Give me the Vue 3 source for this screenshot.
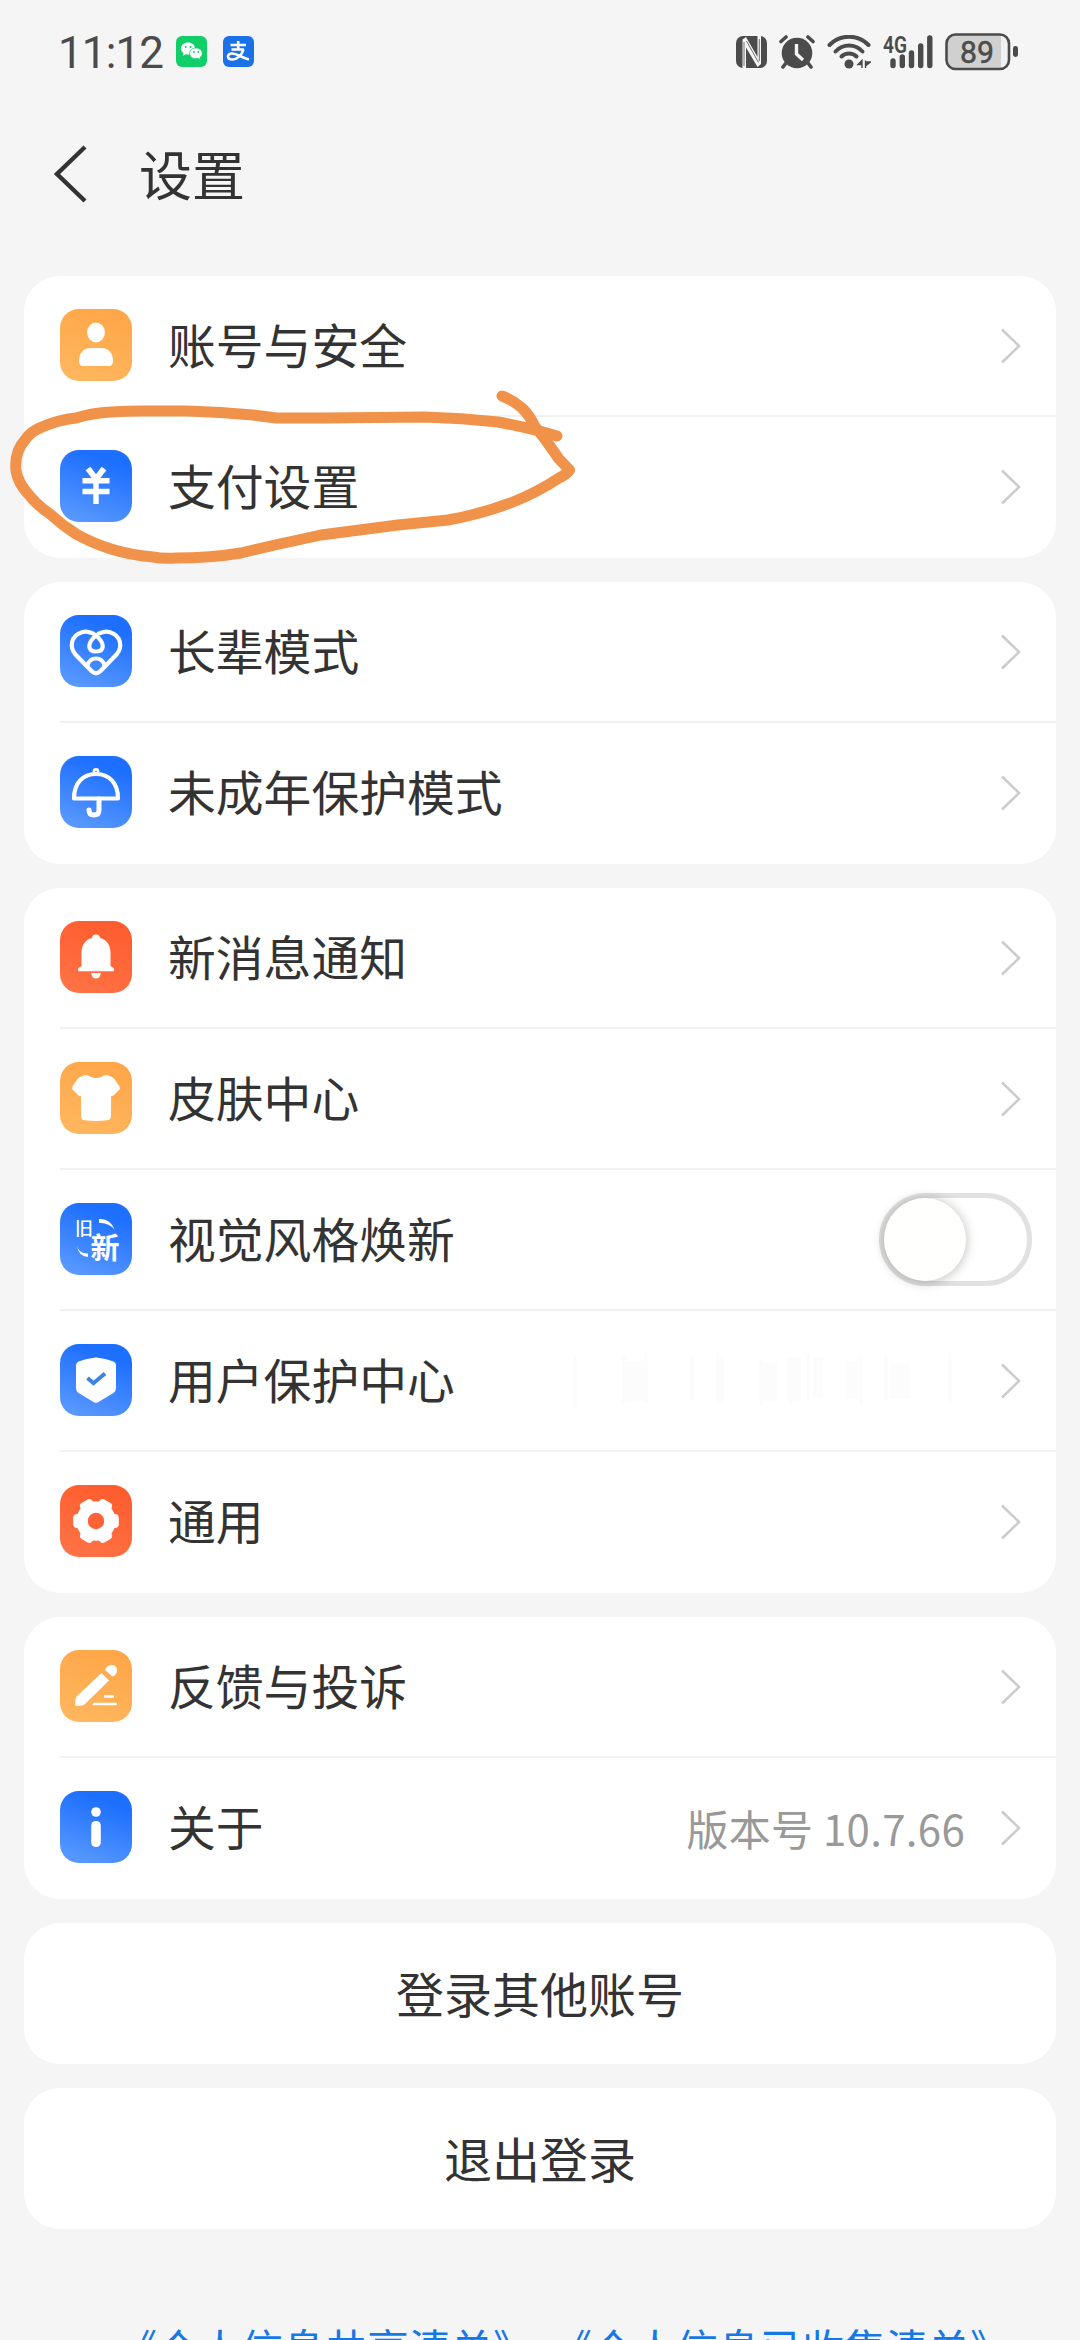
<script setup>
import { ref } from 'vue';

const groups = ref([
  [
    { id: 'account', title: '账号与安全', color: 'orange' },
    { id: 'pay', title: '支付设置', color: 'blue' },
  ],
  [
    { id: 'elder', title: '长辈模式', color: 'blue' },
    { id: 'minor', title: '未成年保护模式', color: 'blue' },
  ],
  [
    { id: 'notice', title: '新消息通知', color: 'red' },
    { id: 'skin', title: '皮肤中心', color: 'orange' },
    { id: 'style', title: '视觉风格焕新', color: 'blue', toggle: true },
    { id: 'protect', title: '用户保护中心', color: 'blue', faded: true },
    { id: 'general', title: '通用', color: 'red' },
  ],
  [
    { id: 'feedback', title: '反馈与投诉', color: 'orange' },
    { id: 'about', title: '关于', color: 'blue', value: '版本号 10.7.66' },
  ],
]);

const actions = ['登录其他账号', '退出登录'];
const links = ['《个人信息共享清单》', '《个人信息已收集清单》'];
const newStyle = ref(false);
const lobes = [0, 60, 120, 180, 240, 300];
</script>

<template>
  <div class="page">
    <header class="status-bar">
      <span class="time">11:12</span>
      <svg class="app-icon wechat" viewBox="0 0 31 31">
        <rect width="31" height="31" rx="6" fill="#10cf68" />
        <path d="M12 6.500c-4 0-7 2.600-7 6 0 2 1 3.500 2.500 4.600l-.5 2.600 3-1.500 2 .3c4 0 7-2.600 7-6s-3-6-7-6z" fill="#fff" />
        <path d="M20 12c-3.700 0-6.300 2.400-6.300 5.400s2.600 5.300 6.300 5.300l2.200-.3 2.300 1.300-.5-2.200c1.400-1 2.300-2.400 2.300-4.100 0-3-2.600-5.400-6.300-5.400z" fill="#fff" stroke="#10cf68" stroke-width=".8" />
        <g fill="#10cf68">
          <circle cx="9.700" cy="11" r="1" />
          <circle cx="14.500" cy="11" r="1" />
          <circle cx="18" cy="16" r=".9" />
          <circle cx="22.300" cy="16" r=".9" />
        </g>
      </svg>
      <svg class="app-icon" viewBox="0 0 31 31">
        <rect width="31" height="31" rx="6" fill="#1b72e8" />
        <g fill="none" stroke="#fff" stroke-width="2.600">
          <path d="M7.500 9h15.500M15.200 5v8.500M8.500 13.500h12.500" />
          <path d="M20.500 13.500c-1.500 5-6 10-11 10-6 0-6-6-.5-6 5 0 9 4 17 6" />
        </g>
      </svg>

      <div class="status-icons">
        <svg class="nfc" viewBox="0 0 31 32">
          <rect width="31" height="32" rx="7" fill="#4b4b4b" />
          <path d="M6.500 32V3.500L10 1l11.500 20V0H25v28l-3.500 3L10 11.500V32z" fill="#f5f5f5" />
          <path d="M8 6v24M10.500 5l12 21.500M23.300 3v22" fill="none" stroke="#4b4b4b" stroke-width=".8" />
        </svg>
        <svg class="alarm" viewBox="0 0 36 34">
          <circle cx="18" cy="18" r="15.300" fill="#4b4b4b" />
          <path d="M2 6.500 7 2M34 6.500 29 2M7 28l-3 4M29 28l3 4" stroke="#4b4b4b" stroke-width="3.600" stroke-linecap="round" />
          <path d="M17.500 9v10l6.500 6" fill="none" stroke="#f5f5f5" stroke-width="3.400" />
        </svg>
        <svg class="wifi" viewBox="0 0 44 34">
          <g fill="none" stroke="#4b4b4b" stroke-width="4" stroke-linecap="round">
            <path d="M2.500 10C13-1 31-1 41.500 10" />
            <path d="M8.500 16.500c7.500-8 19.500-8 27 0" />
            <path d="M14.500 21.500c4-4 11-4 15 0" />
          </g>
          <circle cx="22" cy="29" r="4.500" fill="#4b4b4b" />
          <path d="M35 25.500v7.500M31 29.500l4-4v4zM38.500 33v-7.500M38.500 31l5-4h-5z" fill="#4b4b4b" stroke="#4b4b4b" stroke-width="1.400" />
        </svg>
        <svg class="signal" viewBox="0 0 50 34">
          <text x="0" y="17.500" class="net" textLength="24" lengthAdjust="spacingAndGlyphs">4G</text>
          <g stroke="#4b4b4b" stroke-width="5.400" stroke-linecap="round">
            <path d="M10 26v4.500M19.300 22v8.500M28.500 18v12.500M37.700 11v19.500M46.800 3v27.500" />
          </g>
        </svg>
        <svg class="battery" viewBox="0 0 74 38">
          <rect x="1.500" y="1.500" width="62.500" height="34.500" rx="9" fill="#f1f1f1" />
          <path d="M56 2v34H11q-9 0-9-9V11q0-9 9-9z" fill="#d0d0d0" />
          <rect x="1.500" y="1.500" width="62.500" height="34.500" rx="9" fill="none" stroke="#4b4b4b" stroke-width="2.600" />
          <rect x="68" y="13" width="5" height="11" rx="2.400" fill="#4b4b4b" />
          <text x="32" y="29.500" class="level" text-anchor="middle" textLength="34" lengthAdjust="spacingAndGlyphs">89</text>
        </svg>
      </div>
    </header>

    <nav class="title-bar">
      <svg class="back" viewBox="0 0 36 60">
        <path d="M33 3 5 30l28 27" fill="none" stroke="#333" stroke-width="4.400" />
      </svg>
      <h1>设置</h1>
    </nav>

    <main class="content">
      <section v-for="(group, index) in groups" :key="index" class="card">
        <div v-for="item in group" :key="item.id" class="row">
          <div class="icon" :class="item.color">
            <svg viewBox="0 0 72 72">
              <g v-if="item.id === 'account'" fill="#fff">
                <ellipse cx="36" cy="23.500" rx="8.900" ry="10" />
                <path d="M19 52c0-8 5-13 11-13h12c6 0 11 5 11 13 0 3-1.500 5-4 5H23c-2.500 0-4-2-4-5z" />
              </g>
              <g v-else-if="item.id === 'pay'" fill="none" stroke="#fff" stroke-width="5.400">
                <path d="M28 18.500 36 29l8-10.500" stroke-width="5.800" />
                <path d="M22.500 30.800h27M22.500 41.500h27M36 29v25" />
              </g>
              <g v-else-if="item.id === 'elder'" class="line">
                <path d="M36 36.500C27 36.500 27 28 36 20.500C40 17 46 16 50 17.200C61 20.500 63 32 56.500 39.500L40 56.500Q36 60 32 56.500L15.500 39.500C9 32 11 20.500 22 17.200C26 16 32 17 36 20.500C45 28 45 36.500 36 36.500Z" />
                <path d="M27.500 51C29 41 43 41 44.500 51" />
              </g>
              <g v-else-if="item.id === 'minor'" class="line">
                <path d="M14 42.500C14 27 23 18 36 18s22 9 22 24.500z" />
                <path d="M39 43v11q0 5-5 5t-5-5" stroke-width="5" />
                <circle cx="36" cy="15.500" r="1.300" />
              </g>
              <g v-else-if="item.id === 'notice'" fill="#fff">
                <circle cx="36" cy="17.500" r="4" />
                <path d="M21.500 45V32c0-9 5-15.500 14.500-15.500S50.500 23 50.500 32v13l3 2q1.500 3-1 3.200h-33q-2.500-.2-1-3.200z" />
                <path d="M31 52h10q-1 5.500-5 5.500T31 52z" />
              </g>
              <path v-else-if="item.id === 'skin'" d="M25 13q3-.5 5 1.500 6 3 12 0 2-2 5-1.500l5 2q2 1 3.500 3.500l4 6q1 2-1 4L54 33q-1.500 1.500-3 1v20q0 4-4 4.300-11 1.400-22 0-4-.3-4-4.300V34q-1.500.5-3-1l-4.500-4.500q-2-2-1-4l4-6Q18 16 20 15z" fill="#fff" />
              <g v-else-if="item.id === 'style'" fill="#fff">
                <text x="15" y="31.500" class="old">旧</text>
                <text x="30.500" y="55.500" class="new">新</text>
                <path d="M39 16q11-1 15.500 10.500Q48 19 39 20zM17 42q1.500 9 11 8.500v3.500Q18 53 17 42z" />
              </g>
              <g v-else-if="item.id === 'protect'">
                <path d="M36 13.500q10 1 17.500 4 2.500 1 2.500 4V44q0 3-2.500 5L38 58.300q-2 1-4 0L18.500 49q-2.500-2-2.500-5V21.500q0-3 2.500-4 7.500-3 17.500-4z" fill="#fff" />
                <path d="m27.500 34 6 5.200L45 29.500" fill="none" stroke="#3f83e0" stroke-width="4" />
              </g>
              <g v-else-if="item.id === 'general'">
                <circle cx="36" cy="36" r="19.800" fill="#fff" />
                <rect v-for="deg in lobes" :key="deg" x="43" y="29" width="15.800" height="14" rx="4" fill="#fff" :transform="`rotate(${deg} 36 36)`" />
                <circle cx="36" cy="36" r="8.200" fill="#ff6236" />
              </g>
              <g v-else-if="item.id === 'feedback'" fill="#fff">
                <path d="m41.500 23 7.500 7.500L25 54q-1.500 1.500-3.500 1.500L16 56q-.8 0-.8-1l.3-5.500q0-2 1.500-3.500z" />
                <path d="M45 20q2-5 6.500-5 5.500 0 5.500 5.500 0 4-4.500 6z" />
                <path d="M44 45.300h10v2.500H44zM34 52.700h21.500q1.500 0 1.500 1.300t-1.500 1.300H32z" />
              </g>
              <g v-else fill="#fff">
                <circle cx="36" cy="21" r="4.800" />
                <rect x="31.200" y="30" width="9.600" height="26" rx="4.500" />
              </g>
            </svg>
          </div>
          <span class="label">{{ item.title }}</span>
          <svg v-if="item.faded" class="faded" viewBox="0 0 390 54">
            <path d="M7 2v52M56 4v46M78 0v50M124 2v46M150 0v50M193 6v46M223 6v46M240 0v48M293 4v48M318 2v46M382 0v50" />
            <path d="M56 8h22v40H56zM148 4h8v46h-8zM193 10h16v38h-16zM219 4h14v44h-14zM245 4h10v40h-10zM278 8h16v38h-16zM322 10h20v36h-20z" class="patch" />
          </svg>
          <span v-if="item.value" class="value">{{ item.value }}</span>
          <button v-if="item.toggle" class="toggle" :class="{ on: newStyle }" @click="newStyle = !newStyle">
            <span class="knob"></span>
          </button>
          <svg v-else class="arrow" viewBox="0 0 22 38">
            <path d="M2 2.500 19 19 2 35.500" fill="none" stroke="#ccc" stroke-width="2.600" />
          </svg>
        </div>
      </section>

      <button v-for="action in actions" :key="action" class="card action">{{ action }}</button>
    </main>

    <footer class="links">
      <a v-for="link in links" :key="link">{{ link }}</a>
    </footer>

    <!-- Marcação à mão em volta de "支付设置" -->
    <svg class="marker" viewBox="0 0 600 200">
      <path d="M502 16Q513 20 522 28Q530 36 534 45L547 62L559 79L569.500 90Q567 94 559 98Q538 112 513 122Q482 134 448 140L398 145L321 155L275 165L241 173Q210 178 176 178Q163 179 153 177Q130 175 111 169Q92 163 76 154Q62 145 50 134Q38 126 29 115Q18 103 16 91Q14 72 25 60Q31 51 42 47Q58 40 76 38Q92 33 111 32Q126 31 142 31L188 31Q220 32 253 35L276 38L325 38L425 37Q462 38 498 42Q530 48 557 56" />
    </svg>
  </div>
</template>

<style>
body {
  margin: 0;
  background: #f5f5f5;
}
</style>

<style scoped>
.page {
  position: relative;
  width: 1080px;
  height: 2340px;
  overflow: hidden;
  background: #f5f5f5;
  color: #333;
  font-family: "Noto Sans CJK SC", sans-serif;
}

svg {
  display: block;
  flex: none;
}

/* Barra de status */
.status-bar {
  display: flex;
  align-items: center;
  height: 103px;
  padding: 0 61px 0 58px;
}

.time {
  width: 118px;
  padding-top: 2px;
  box-sizing: border-box;
  color: #4b4b4b;
  font-family: Roboto, sans-serif;
  font-size: 44px;
  letter-spacing: -0.9px;
}

.app-icon {
  width: 31px;
  height: 31px;
}

.wechat {
  margin-right: 16px;
}

.status-icons {
  display: flex;
  align-items: center;
  margin-left: auto;
}

.nfc {
  width: 31px;
  height: 32px;
  margin-right: 12px;
}

.alarm {
  width: 36px;
  height: 34px;
  margin-right: 12px;
}

.wifi {
  width: 44px;
  height: 34px;
  margin-right: 12px;
}

.signal {
  width: 50px;
  height: 34px;
  margin-right: 12px;
  overflow: visible;
}

.battery {
  width: 74px;
  height: 38px;
}

.net {
  font-family: Roboto, sans-serif;
  font-size: 23px;
  font-weight: 600;
  fill: #4b4b4b;
}

.level {
  font-family: Roboto, sans-serif;
  font-size: 31px;
  font-weight: 400;
  fill: #4b4b4b;
  stroke: #4b4b4b;
  stroke-width: 0.5px;
}

/* Título */
.title-bar {
  display: flex;
  align-items: center;
  height: 142px;
  padding-left: 52px;
}

.back {
  width: 36px;
  height: 60px;
}

h1 {
  margin: 0 0 2px 51px;
  font-size: 53px;
  font-weight: 400;
  line-height: 80px;
}

/* Cartões */
.content {
  display: flex;
  flex-direction: column;
  gap: 24px;
  padding: 31px 24px 0;
}

.card {
  padding: 0 0 0 36px;
  border: none;
  border-radius: 36px;
  background: #fff;
}

.row {
  display: flex;
  align-items: center;
  box-sizing: border-box;
  height: 141px;
  padding: 0 34px 1px 0;
  border-bottom: 2px solid #f1f1f1;
}

.row:last-child {
  border-color: transparent;
}

.icon {
  width: 72px;
  height: 72px;
  border-radius: 19px;
}

.orange {
  background: linear-gradient(200deg, #ffa446, #ffb860);
}

.blue {
  background: linear-gradient(200deg, #1d6fff 20%, #5f9dff);
}

.red {
  background: linear-gradient(200deg, #ff5a2b, #ff7447);
}

.line {
  fill: none;
  stroke: #fff;
  stroke-width: 4.200px;
  stroke-linecap: round;
  stroke-linejoin: round;
}

.old {
  font-size: 18px;
  font-weight: 500;
}

.new {
  font-size: 29px;
  font-weight: 700;
}

.label {
  margin: 0 0 3px 36px;
  font-size: 47.800px;
  line-height: 72px;
}

.value {
  margin-left: auto;
  color: #999;
  font-size: 42px;
  letter-spacing: 0.3px;
}

.arrow {
  width: 22px;
  height: 38px;
  margin: 1px 0 0 auto;
}

.value + .arrow {
  margin-left: 35px;
}

.faded {
  width: 390px;
  height: 54px;
  margin-left: auto;
  fill: none;
  stroke: #fbfbfb;
  stroke-width: 3px;
}

.faded .patch {
  fill: #fcfcfc;
  stroke: none;
}

.faded + .arrow {
  margin-left: 42px;
}

/* Interruptor */
.toggle {
  box-sizing: border-box;
  width: 153px;
  height: 93px;
  margin: 1px -10px 0 auto;
  padding: 0;
  border: 5px solid #e1e1e1;
  border-radius: 47px;
  background: #fff;
}

.knob {
  display: block;
  width: 82px;
  height: 83px;
  border-radius: 50%;
  background: #fffffd;
  box-shadow: 0 1px 12px rgba(0, 0, 0, 0.28);
}

.toggle.on {
  background: #1677ff;
}

.toggle.on .knob {
  margin-left: auto;
}

.action {
  height: 141px;
  padding: 0 0 4px;
  color: #333;
  font-family: inherit;
  font-size: 48px;
  line-height: 72px;
  text-align: center;
}

.links {
  display: flex;
  gap: 15px;
  padding: 87px 0 0 115px;
  color: #1677e6;
  font-size: 42px;
  line-height: 62px;
  white-space: nowrap;
}

.marker {
  position: absolute;
  top: 380px;
  left: 0;
  width: 600px;
  height: 200px;
  fill: none;
  stroke: #f0924a;
  stroke-width: 11px;
  stroke-linecap: round;
  stroke-linejoin: round;
}
</style>
